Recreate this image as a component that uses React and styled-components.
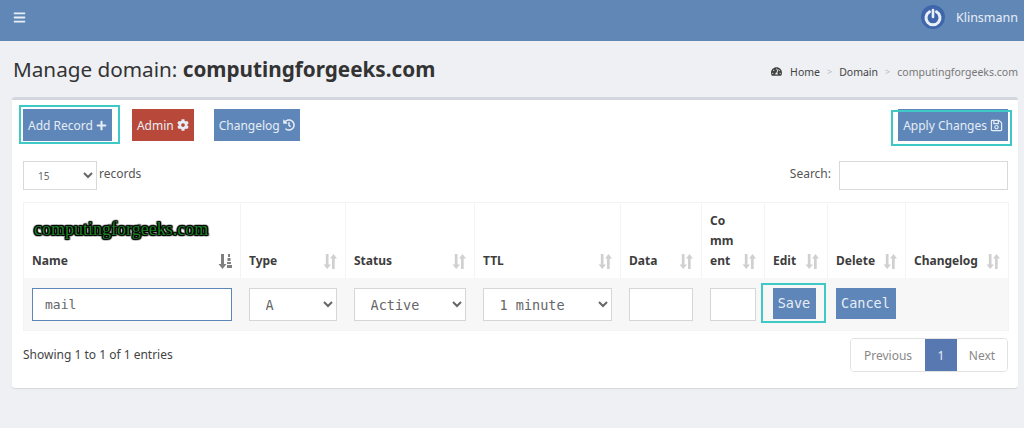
import React from 'react';
import styled, { createGlobalStyle } from 'styled-components';
import { FaBars, FaCog, FaHistory, FaPlus, FaRegSave, FaTachometerAlt } from 'react-icons/fa';

const GlobalStyle = createGlobalStyle`
  html, body {
    margin: 0;
    padding: 0;
    background: #eef0f4;
  }
  body {
    font-family: "Noto Sans", "Open Sans", sans-serif;
    color: #333;
    font-size: 13px;
    height: 428px;
    overflow: hidden;
  }
  * {
    box-sizing: border-box;
  }
`;

const TopBar = styled.header`
  height: 41px;
  background: #6187b7;
  color: #e8eef6;
  display: flex;
  align-items: center;
  justify-content: space-between;
  padding: 0 6px 7px 13px;
`;

const UserBlock = styled.div`
  display: flex;
  align-items: center;
  gap: 11px;
  font-size: 12.5px;
`;

const TitleRow = styled.div`
  height: 56px;
  display: flex;
  align-items: center;
  justify-content: space-between;
  padding: 0 6px 0 13px;
`;

const Title = styled.h1`
  margin: 0;
  font-size: 20.7px;
  font-weight: 400;
  color: #333;
  b {
    font-weight: 700;
  }
`;

const Crumbs = styled.ol`
  display: flex;
  align-items: center;
  list-style: none;
  margin: 5px 0 0;
  padding: 0;
  font-size: 10.5px;
  color: #444;
  li + li::before {
    content: '>';
    color: #bbb;
    margin: 0 7px;
    font-size: 9px;
  }
`;

const Crumb = styled.li`
  display: flex;
  align-items: center;
  color: ${(p) => (p.$active ? '#777' : '#444')};
  svg {
    margin-right: 8px;
  }
`;

const Card = styled.section`
  margin: 0 6px 0 12px;
  height: 291px;
  background: #fff;
  border-top: 3px solid #d2d6de;
  border-radius: 3px;
  box-shadow: 0 1px 1px rgba(0, 0, 0, 0.1);
  padding: 9px 10px 0 11px;
`;

const Toolbar = styled.div`
  display: flex;
  align-items: center;
  height: 32px;
`;

const Button = styled.button`
  position: relative;
  height: ${(p) => p.$h || 32}px;
  padding: 0 5px;
  display: inline-flex;
  align-items: center;
  gap: 3px;
  border: 0;
  border-radius: 0;
  font-family: inherit;
  font-size: 12px;
  color: #e6edf6;
  background: ${(p) => (p.$danger ? '#b8493a' : '#5f86b8')};
  margin-right: ${(p) => p.$gap || 0}px;
  margin-left: ${(p) => (p.$push ? 'auto' : '0')};
`;

const Marker = styled.span`
  position: absolute;
  top: ${(p) => p.$t}px;
  left: ${(p) => p.$l}px;
  right: ${(p) => p.$r}px;
  bottom: ${(p) => p.$b}px;
  border: 2px solid #3fc9c6;
  pointer-events: none;
`;

const FilterRow = styled.div`
  display: flex;
  align-items: center;
  justify-content: space-between;
  height: 29px;
  margin-top: 20px;
  font-size: 12px;
  color: #555;
`;

const Field = styled.label`
  display: flex;
  align-items: center;
  gap: 2px;
`;

const FieldText = styled.span`
  padding-bottom: 4px;
`;

const PageSize = styled.select`
  width: 74px;
  height: 29px;
  border: 1px solid #d9d9d9;
  background: #fff;
  color: #666;
  font-family: inherit;
  font-size: 10px;
  padding-left: 10px;
`;

const SearchInput = styled.input`
  width: 169px;
  height: 29px;
  margin-left: 6px;
  border: 1px solid #d9d9d9;
`;

const TableWrap = styled.div`
  position: relative;
  margin-top: 12px;
`;

const Watermark = styled.span`
  position: absolute;
  left: 11px;
  top: 16px;
  font-family: "Liberation Serif", serif;
  font-size: 18px;
  line-height: 22px;
  color: #1c7f24;
  text-shadow: 0 0 2px #000, 1px 0 1px #000, -1px 0 1px #000, 0 1px 1px #000, 0 -1px 1px #000,
    1px 1px 1px #000, -1px -1px 1px #000, 1px -1px 1px #000, -1px 1px 1px #000;
`;

const Table = styled.table`
  width: 985px;
  table-layout: fixed;
  border-collapse: collapse;
  border: 1px solid #f4f4f4;
`;

const Th = styled.th`
  height: 75px;
  padding: 0 8px 7px;
  border-left: 1px solid #f4f4f4;
  vertical-align: bottom;
  text-align: left;
  font-size: 12px;
  line-height: 20px;
  font-weight: 700;
  color: #3d3d3d;
  overflow-wrap: anywhere;
`;

const HeadInner = styled.div`
  display: flex;
  align-items: flex-end;
  justify-content: space-between;
  gap: 7px;
`;

const SortGlyph = styled.svg`
  flex: none;
  width: 14px;
  height: 15px;
  margin-bottom: 2px;
  fill: ${(p) => (p.$on ? '#808080' : '#d0d0d0')};
`;

const Row = styled.tr`
  background: #f7f7f7;
`;

const Td = styled.td`
  height: 53px;
  padding: 2px 9px 0 8px;
  vertical-align: middle;
  white-space: nowrap;
`;

const controlBase = `
  display: block;
  height: 33px;
  background: #fff;
  border: 1px solid #d6d6d6;
  color: #666;
  font-family: "DejaVu Sans Mono", "Liberation Mono", monospace;
`;

const TextInput = styled.input`
  ${controlBase}
  width: 100%;
  padding: 0 12px;
  font-size: 13px;
  border-color: ${(p) => (p.$focus ? '#5f86b8' : '#d6d6d6')};
`;

const SelectInput = styled.select`
  ${controlBase}
  width: 100%;
  padding-left: 12px;
  font-size: 13.5px;
`;

const RowButton = styled(Button)`
  font-family: "DejaVu Sans Mono", "Liberation Mono", monospace;
  font-size: 13.5px;
  padding: 0 4px 2px;
  justify-content: center;
  width: ${(p) => p.$w}px;
  margin-bottom: 2px;
`;

const Footer = styled.div`
  display: flex;
  align-items: center;
  justify-content: space-between;
  margin-top: 7px;
  font-size: 12px;
  color: #444;
`;

const FooterText = styled.span`
  padding-bottom: 2px;
`;

const Pager = styled.nav`
  display: flex;
  height: 34px;
  border: 1px solid #e2e2e2;
  border-radius: 4px;
  overflow: hidden;
  color: #8a8a8a;
`;

const PageLink = styled.a`
  width: ${(p) => p.$w}px;
  display: flex;
  align-items: center;
  justify-content: center;
  background: ${(p) => (p.$active ? '#5878b2' : '#fff')};
  color: ${(p) => (p.$active ? '#e6edf6' : '#888')};
`;

const SortIcon = ({ on }) => (
  <SortGlyph viewBox="0 0 14 15" $on={on}>
    {on ? (
      <>
        <path d="M3 0h3v10h2.5L4.500 15 .5 10H3z" />
        <path d="M10 0h2v3h-2zM9.500 4h3v3h-3zM9 8h4v2H9zM9 11h5v3H9z" />
      </>
    ) : (
      <>
        <path d="M2.800 0h2.700v10.500h2.500L4.200 15 .5 10.500h2.300z" />
        <path d="M10.500 0 14 4.500h-2.300V15H9V4.500H7z" />
      </>
    )}
  </SortGlyph>
);

const PowerIcon = () => (
  <svg width="24" height="24" viewBox="0 0 24 24">
    <circle cx="12" cy="12" r="12" fill="#3f66ab" />
    <path
      d="M8.500 6.800a7 7 0 1 0 7 0"
      fill="none"
      stroke="#eaf0f8"
      strokeWidth="3"
      strokeLinecap="round"
    />
    <path d="M12 5v7" stroke="#eaf0f8" strokeWidth="2.600" strokeLinecap="round" />
  </svg>
);

const columns = [
  { label: 'Name', width: 217, on: true },
  { label: 'Type', width: 105 },
  { label: 'Status', width: 129 },
  { label: 'TTL', width: 146 },
  { label: 'Data', width: 81 },
  { label: 'Comment', width: 63 },
  { label: 'Edit', width: 63 },
  { label: 'Delete', width: 78 },
  { label: 'Changelog', width: 103 },
];

export default function App() {
  return (
    <>
      <GlobalStyle />
      <TopBar>
        <FaBars size={13} />
        <UserBlock>
          <PowerIcon />
          <span>Klinsmann</span>
        </UserBlock>
      </TopBar>
      <TitleRow>
        <Title>
          Manage domain: <b>computingforgeeks.com</b>
        </Title>
        <Crumbs>
          <Crumb>
            <FaTachometerAlt size={11} />
            Home
          </Crumb>
          <Crumb>Domain</Crumb>
          <Crumb $active>computingforgeeks.com</Crumb>
        </Crumbs>
      </TitleRow>
      <Card>
        <Toolbar>
          <Button $gap={20}>
            Add Record <FaPlus size={11} />
            <Marker $t={-4} $l={-4} $r={-8} $b={-3} />
          </Button>
          <Button $danger $gap={20}>
            Admin <FaCog size={12} />
          </Button>
          <Button>
            Changelog <FaHistory size={12} />
          </Button>
          <Button $push>
            Apply Changes <FaRegSave size={13} />
            <Marker $t={1} $l={-7} $r={-4} $b={-5} />
          </Button>
        </Toolbar>
        <FilterRow>
          <Field>
            <PageSize defaultValue="15">
              <option>15</option>
            </PageSize>
            <FieldText>records</FieldText>
          </Field>
          <Field>
            <FieldText>Search:</FieldText>
            <SearchInput />
          </Field>
        </FilterRow>
        <TableWrap>
          <Watermark>computingforgeeks.com</Watermark>
          <Table>
            <colgroup>
              {columns.map((c) => (
                <col key={c.label} width={c.width} />
              ))}
            </colgroup>
            <thead>
              <tr>
                {columns.map((c) => (
                  <Th key={c.label}>
                    <HeadInner>
                      <span>{c.label}</span>
                      <SortIcon on={c.on} />
                    </HeadInner>
                  </Th>
                ))}
              </tr>
            </thead>
            <tbody>
              <Row>
                <Td>
                  <TextInput $focus defaultValue="mail" />
                </Td>
                <Td>
                  <SelectInput>
                    <option>A</option>
                  </SelectInput>
                </Td>
                <Td>
                  <SelectInput>
                    <option>Active</option>
                  </SelectInput>
                </Td>
                <Td>
                  <SelectInput>
                    <option>1 minute</option>
                  </SelectInput>
                </Td>
                <Td>
                  <TextInput />
                </Td>
                <Td>
                  <TextInput />
                </Td>
                <Td>
                  <RowButton $w={43} $h={31}>
                    Save
                    <Marker $t={-5} $l={-12} $r={-10} $b={-4} />
                  </RowButton>
                </Td>
                <Td>
                  <RowButton $w={60} $h={31}>
                    Cancel
                  </RowButton>
                </Td>
                <Td />
              </Row>
            </tbody>
          </Table>
        </TableWrap>
        <Footer>
          <FooterText>Showing 1 to 1 of 1 entries</FooterText>
          <Pager>
            <PageLink $w={74}>Previous</PageLink>
            <PageLink $w={32} $active>
              1
            </PageLink>
            <PageLink $w={50}>Next</PageLink>
          </Pager>
        </Footer>
      </Card>
    </>
  );
}
